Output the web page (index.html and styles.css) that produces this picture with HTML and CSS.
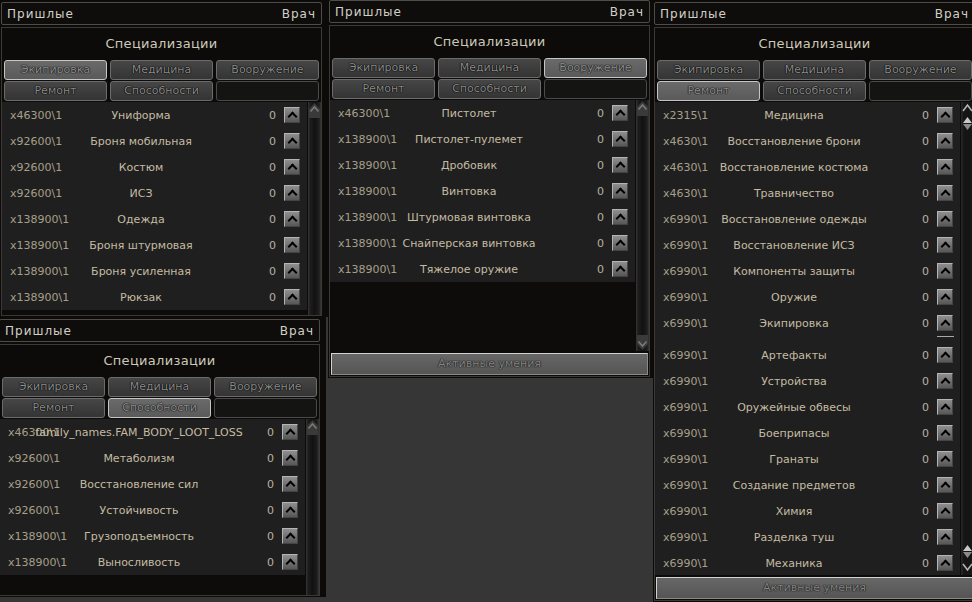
FILE: index.html
```html
<!DOCTYPE html>
<html>
<head>
    <meta charset="utf-8">
    <title>Специализации</title>
    <link rel="stylesheet" href="styles.css">
</head>
<body>
    <!-- Окно 1: экипировка -->
    <div class="win w1">
        <div class="title"><span>Пришлые</span><span>Врач</span></div>
        <div class="frame">
            <div class="head">Специализации</div>
            <div class="tabs">
                <div class="tab on">Экипировка</div>
                <div class="tab">Медицина</div>
                <div class="tab">Вооружение</div>
                <div class="tab">Ремонт</div>
                <div class="tab">Способности</div>
                <div class="tab blank"></div>
            </div>
            <div class="body">
                <div class="list">
                    <div class="row"><span class="cost">x46300\1</span><span class="name">Униформа</span><span class="lvl">0</span><span class="up"></span></div>
                    <div class="row"><span class="cost">x92600\1</span><span class="name">Броня мобильная</span><span class="lvl">0</span><span class="up"></span></div>
                    <div class="row"><span class="cost">x92600\1</span><span class="name">Костюм</span><span class="lvl">0</span><span class="up"></span></div>
                    <div class="row"><span class="cost">x92600\1</span><span class="name">ИСЗ</span><span class="lvl">0</span><span class="up"></span></div>
                    <div class="row"><span class="cost">x138900\1</span><span class="name">Одежда</span><span class="lvl">0</span><span class="up"></span></div>
                    <div class="row"><span class="cost">x138900\1</span><span class="name">Броня штурмовая</span><span class="lvl">0</span><span class="up"></span></div>
                    <div class="row"><span class="cost">x138900\1</span><span class="name">Броня усиленная</span><span class="lvl">0</span><span class="up"></span></div>
                    <div class="row"><span class="cost">x138900\1</span><span class="name">Рюкзак</span><span class="lvl">0</span><span class="up"></span></div>
                </div>
                <div class="scroll">
                    <svg width="13" height="16" viewBox="0 0 13 16"><path d="M1 16V7L6.5 1 12 7v9" fill="#3a3a3a"/><path d="M2.5 9.5 6.5 5 10.5 9.5" fill="none" stroke="#7a7a7a" stroke-width="1.6"/></svg>
                </div>
            </div>
        </div>
    </div>

    <!-- Окно 2: способности -->
    <div class="win w2">
        <div class="title"><span>Пришлые</span><span>Врач</span></div>
        <div class="frame">
            <div class="head">Специализации</div>
            <div class="tabs">
                <div class="tab">Экипировка</div>
                <div class="tab">Медицина</div>
                <div class="tab">Вооружение</div>
                <div class="tab">Ремонт</div>
                <div class="tab on">Способности</div>
                <div class="tab blank"></div>
            </div>
            <div class="body">
                <div class="list">
                    <div class="row"><span class="cost">x46300\1</span><span class="name">family_names.FAM_BODY_LOOT_LOSS</span><span class="lvl">0</span><span class="up"></span></div>
                    <div class="row"><span class="cost">x92600\1</span><span class="name">Метаболизм</span><span class="lvl">0</span><span class="up"></span></div>
                    <div class="row"><span class="cost">x92600\1</span><span class="name">Восстановление сил</span><span class="lvl">0</span><span class="up"></span></div>
                    <div class="row"><span class="cost">x92600\1</span><span class="name">Устойчивость</span><span class="lvl">0</span><span class="up"></span></div>
                    <div class="row"><span class="cost">x138900\1</span><span class="name">Грузоподъемность</span><span class="lvl">0</span><span class="up"></span></div>
                    <div class="row"><span class="cost">x138900\1</span><span class="name">Выносливость</span><span class="lvl">0</span><span class="up"></span></div>
                </div>
                <div class="scroll">
                    <svg width="13" height="16" viewBox="0 0 13 16"><path d="M1 16V7L6.5 1 12 7v9" fill="#3a3a3a"/><path d="M2.5 9.5 6.5 5 10.5 9.5" fill="none" stroke="#7a7a7a" stroke-width="1.6"/></svg>
                </div>
            </div>
        </div>
    </div>

    <!-- Окно 3: вооружение -->
    <div class="win w3">
        <div class="title"><span>Пришлые</span><span>Врач</span></div>
        <div class="frame">
            <div class="head">Специализации</div>
            <div class="tabs">
                <div class="tab">Экипировка</div>
                <div class="tab">Медицина</div>
                <div class="tab on">Вооружение</div>
                <div class="tab">Ремонт</div>
                <div class="tab">Способности</div>
                <div class="tab blank"></div>
            </div>
            <div class="body">
                <div class="list">
                    <div class="row"><span class="cost">x46300\1</span><span class="name">Пистолет</span><span class="lvl">0</span><span class="up"></span></div>
                    <div class="row"><span class="cost">x138900\1</span><span class="name">Пистолет-пулемет</span><span class="lvl">0</span><span class="up"></span></div>
                    <div class="row"><span class="cost">x138900\1</span><span class="name">Дробовик</span><span class="lvl">0</span><span class="up"></span></div>
                    <div class="row"><span class="cost">x138900\1</span><span class="name">Винтовка</span><span class="lvl">0</span><span class="up"></span></div>
                    <div class="row"><span class="cost">x138900\1</span><span class="name">Штурмовая винтовка</span><span class="lvl">0</span><span class="up"></span></div>
                    <div class="row"><span class="cost">x138900\1</span><span class="name">Снайперская винтовка</span><span class="lvl">0</span><span class="up"></span></div>
                    <div class="row"><span class="cost">x138900\1</span><span class="name">Тяжелое оружие</span><span class="lvl">0</span><span class="up"></span></div>
                </div>
                <div class="scroll">
                    <svg width="13" height="16" viewBox="0 0 13 16"><path d="M1 16V7L6.5 1 12 7v9" fill="#3a3a3a"/><path d="M2.5 9.5 6.5 5 10.5 9.5" fill="none" stroke="#7a7a7a" stroke-width="1.6"/></svg>
                    <svg width="13" height="16" viewBox="0 0 13 16"><path d="M1 0v9l5.5 6L12 9V0" fill="#3a3a3a"/><path d="M2.5 6.5 6.5 11 10.5 6.5" fill="none" stroke="#7a7a7a" stroke-width="1.6"/></svg>
                </div>
            </div>
            <div class="foot">Активные умения</div>
        </div>
    </div>

    <!-- Окно 4: ремонт -->
    <div class="win w4">
        <div class="title"><span>Пришлые</span><span>Врач</span></div>
        <div class="frame">
            <div class="head">Специализации</div>
            <div class="tabs">
                <div class="tab">Экипировка</div>
                <div class="tab">Медицина</div>
                <div class="tab">Вооружение</div>
                <div class="tab on">Ремонт</div>
                <div class="tab">Способности</div>
                <div class="tab blank"></div>
            </div>
            <div class="body">
                <div class="list full">
                    <div class="row"><span class="cost">x2315\1</span><span class="name">Медицина</span><span class="lvl">0</span><span class="up"></span></div>
                    <div class="row"><span class="cost">x4630\1</span><span class="name">Восстановление брони</span><span class="lvl">0</span><span class="up"></span></div>
                    <div class="row"><span class="cost">x4630\1</span><span class="name">Восстановление костюма</span><span class="lvl">0</span><span class="up"></span></div>
                    <div class="row"><span class="cost">x4630\1</span><span class="name">Травничество</span><span class="lvl">0</span><span class="up"></span></div>
                    <div class="row"><span class="cost">x6990\1</span><span class="name">Восстановление одежды</span><span class="lvl">0</span><span class="up"></span></div>
                    <div class="row"><span class="cost">x6990\1</span><span class="name">Восстановление ИСЗ</span><span class="lvl">0</span><span class="up"></span></div>
                    <div class="row"><span class="cost">x6990\1</span><span class="name">Компоненты защиты</span><span class="lvl">0</span><span class="up"></span></div>
                    <div class="row"><span class="cost">x6990\1</span><span class="name">Оружие</span><span class="lvl">0</span><span class="up"></span></div>
                    <div class="row"><span class="cost">x6990\1</span><span class="name">Экипировка</span><span class="lvl">0</span><span class="up"></span></div>
                    <div class="split"></div>
                    <div class="row"><span class="cost">x6990\1</span><span class="name">Артефакты</span><span class="lvl">0</span><span class="up"></span></div>
                    <div class="row"><span class="cost">x6990\1</span><span class="name">Устройства</span><span class="lvl">0</span><span class="up"></span></div>
                    <div class="row"><span class="cost">x6990\1</span><span class="name">Оружейные обвесы</span><span class="lvl">0</span><span class="up"></span></div>
                    <div class="row"><span class="cost">x6990\1</span><span class="name">Боеприпасы</span><span class="lvl">0</span><span class="up"></span></div>
                    <div class="row"><span class="cost">x6990\1</span><span class="name">Гранаты</span><span class="lvl">0</span><span class="up"></span></div>
                    <div class="row"><span class="cost">x6990\1</span><span class="name">Создание предметов</span><span class="lvl">0</span><span class="up"></span></div>
                    <div class="row"><span class="cost">x6990\1</span><span class="name">Химия</span><span class="lvl">0</span><span class="up"></span></div>
                    <div class="row"><span class="cost">x6990\1</span><span class="name">Разделка туш</span><span class="lvl">0</span><span class="up"></span></div>
                    <div class="row"><span class="cost">x6990\1</span><span class="name">Механика</span><span class="lvl">0</span><span class="up"></span></div>
                </div>
                <div class="scroll thin">
                    <svg width="13" height="30" viewBox="0 0 13 30"><path d="M2 9 6.5 3 11 9" fill="none" stroke="#b5b5b5" stroke-width="1.6"/><path d="M6.5 15 11 21H2z" fill="#c8c8c8"/><path d="M6.5 28 11 22H2z" fill="#8a8a8a"/></svg>
                    <svg width="13" height="32" viewBox="0 0 13 32"><path d="M6.5 2 11 8H2z" fill="#c8c8c8"/><path d="M6.5 15 11 9H2z" fill="#8a8a8a"/><path d="M2 21 6.5 27 11 21" fill="none" stroke="#b5b5b5" stroke-width="1.6"/></svg>
                </div>
            </div>
            <div class="foot">Активные умения</div>
        </div>
    </div>
</body>
</html>
```

FILE: styles.css
```css
body { margin: 0; width: 972px; height: 602px; overflow: hidden; position: relative; background: #363636; font-family: "DejaVu Sans", Verdana, sans-serif; }

/* окна лежат на "рабочем столе" поверх друг друга */
.win { position: absolute; box-sizing: border-box; width: 328px; padding: 2px 6px 1px 1px; background: #0c0b09; display: flex; flex-direction: column; }
.w1 { left: 0; top: 0; height: 317px; }
.w2 { left: -2px; top: 317px; height: 280px; }
.w3 { left: 328px; top: -2px; height: 380px; }
.w4 { left: 653px; top: 0; height: 602px; }

.title { box-sizing: border-box; height: 23px; border: 1px solid #4d4c47; border-radius: 2px; padding: 0 5px; display: flex; justify-content: space-between; align-items: center; font-size: 12px; letter-spacing: 1px; color: #d2d0c6; background: #0e0d0b; }
.frame { flex: 1; min-height: 0; margin-top: 2px; border: 1px solid #3a3934; display: flex; flex-direction: column; }
.head { height: 32px; line-height: 32px; text-align: center; font-size: 13px; letter-spacing: 0.3px; color: #cdc8b8; }

.tabs { display: grid; grid-template-columns: repeat(3, 1fr); grid-auto-rows: 20px; gap: 1px 3px; padding: 0 2px; }
.tab { box-sizing: border-box; border: 1px solid #6c6c6c; border-radius: 3px; background: linear-gradient(#464646, #343434); text-align: center; line-height: 18px; font-size: 11px; color: #8c8c8c; text-shadow: 0 0 1px #000, 0 0 1px #000, 0 0 1px #000; }
.tab.on { background: linear-gradient(#6a6a6a, #5a5a5a); border-color: #c6c6c6; color: #8e8e8e; text-shadow: 0 0 1px #111, 0 0 1px #111, 0 0 1px #111; }
.tab.blank { background: #141413; border-color: #4a4a4a; }

.body { flex: 1; min-height: 0; margin-top: 1px; display: flex; gap: 1px; }
.list { flex: 1; background: #0d0c0a; overflow: hidden; }
.row { display: grid; grid-template-columns: 278px 16px; column-gap: 4px; height: 26px; align-items: center; background: #1f1f1f; font-size: 11px; white-space: nowrap; }
.cost, .name, .lvl { grid-area: 1 / 1; }
.cost { justify-self: start; padding-left: 8px; color: #a79f8a; }
.name { justify-self: center; color: #c4bba2; }
.lvl { justify-self: end; padding-right: 4px; color: #b9b2a2; }
.full { background: #1f1f1f; }
.split { height: 6px; position: relative; }
.split::after { content: ""; position: absolute; left: 282px; top: 0; width: 17px; height: 1px; background: #a8a8a8; }

/* кнопка повышения */
.up { grid-area: 1 / 2; box-sizing: border-box; width: 16px; height: 16px; border: 1px solid; border-color: #b4b4b4 #444 #444 #b4b4b4; background: linear-gradient(#8e8e8e, #575757); display: flex; justify-content: center; }
.up::after { content: ""; width: 5px; height: 5px; margin-top: 5px; border-left: 2.5px solid #000; border-top: 2.5px solid #000; transform: rotate(45deg); }

.scroll { width: 13px; display: flex; flex-direction: column; justify-content: space-between; background: linear-gradient(to right, #383838 0, #1d1d1d 2px, #121212 50%, #1d1d1d 11px, #383838 13px); }
.scroll svg { display: block; }
.scroll.thin { background: linear-gradient(to right, #2a2a2a 0, #151515 3px, #151515 10px, #2a2a2a 13px); }

.foot { box-sizing: border-box; height: 22px; margin: 2px 1px 1px; border: 1px solid; border-color: #d2d2d2 #8a8a8a #8a8a8a #d2d2d2; background: linear-gradient(#676767, #555); text-align: center; line-height: 20px; font-size: 11px; color: #858585; text-shadow: 0 0 1px #1a1a1a, 0 0 1px #1a1a1a, 0 0 1px #1a1a1a; }
```
